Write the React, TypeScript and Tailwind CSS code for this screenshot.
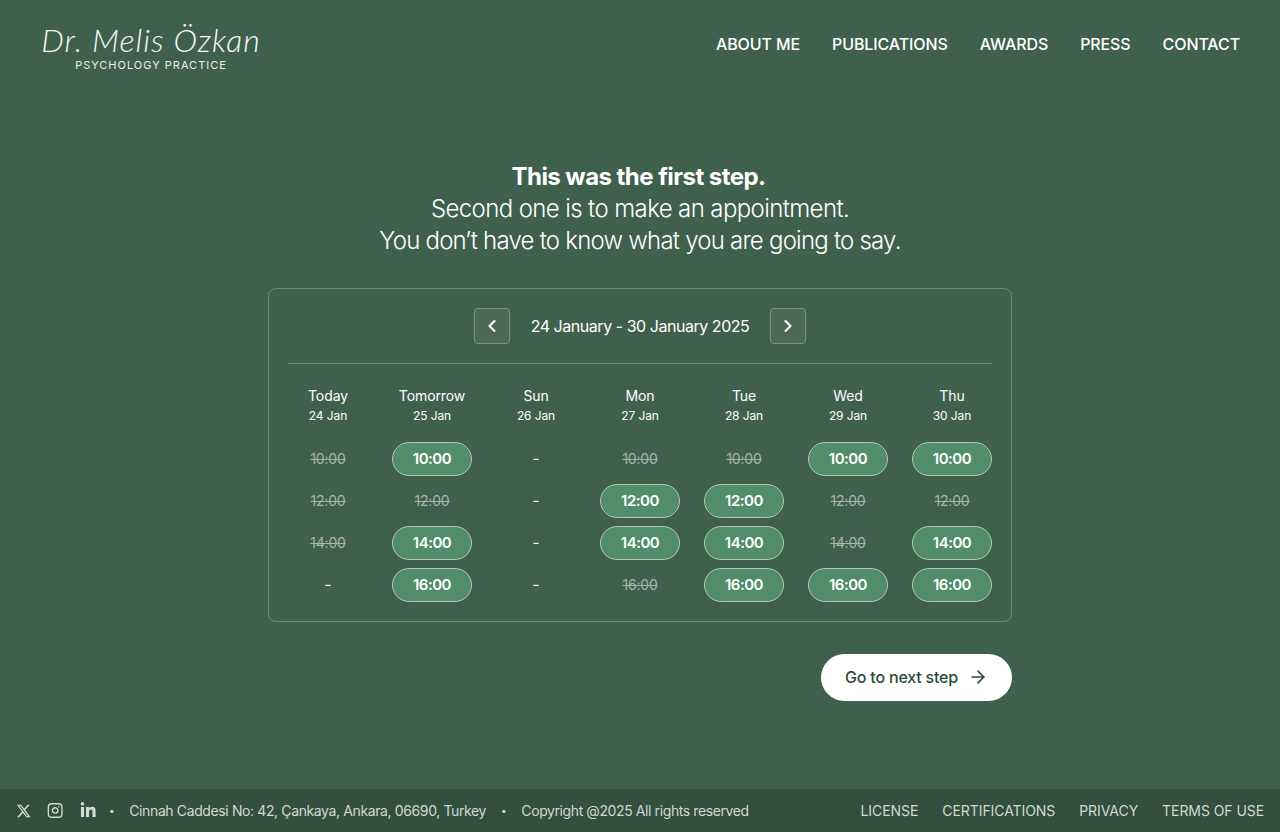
import React from "react";
import { ChevronLeft, ChevronRight, ArrowRight, Instagram } from "lucide-react";
import { FaXTwitter, FaLinkedinIn } from "react-icons/fa6";

const days = [
  { d: "Today", s: "24 Jan", t: ["x10:00", "x12:00", "x14:00", "-"] },
  { d: "Tomorrow", s: "25 Jan", t: ["10:00", "x12:00", "14:00", "16:00"] },
  { d: "Sun", s: "26 Jan", t: ["-", "-", "-", "-"] },
  { d: "Mon", s: "27 Jan", t: ["x10:00", "12:00", "14:00", "x16:00"] },
  { d: "Tue", s: "28 Jan", t: ["x10:00", "12:00", "14:00", "16:00"] },
  { d: "Wed", s: "29 Jan", t: ["10:00", "x12:00", "x14:00", "16:00"] },
  { d: "Thu", s: "30 Jan", t: ["10:00", "x12:00", "14:00", "16:00"] },
];

function Slot({ v }: { v: string }) {
  if (v === "-") return <div className="h-[34px] flex items-center justify-center text-[15px] text-white">-</div>;
  if (v[0] === "x")
    return <div className="h-[34px] pb-px flex items-center justify-center text-[14px] tracking-[-0.2px] line-through text-[#a3b5a9]">{v.slice(1)}</div>;
  return (
    <button className="h-[34px] w-20 pt-px rounded-[17px] border border-[#b5c7ba] bg-[#528d6b] text-[15px] tracking-[-0.5px] font-semibold text-white">
      {v}
    </button>
  );
}

export default function App() {
  return (
    <div className="h-[832px] w-[1280px] overflow-hidden bg-[#40604e] text-white flex flex-col font-['Inter',sans-serif]">
      <header className="h-[88px] flex items-center justify-between pl-[41px] pr-10 shrink-0">
        <div className="flex flex-col items-center w-[220px] pt-[7px]">
          <div className="font-['Lato',sans-serif] italic text-[32px] leading-[32px] tracking-[1px] font-light text-[#f4f7f5] whitespace-nowrap">
            Dr. Melis Özkan
          </div>
          <div className="text-[11px] leading-[14px] tracking-[1px] text-[#e8eeea] mt-[2px] whitespace-nowrap">PSYCHOLOGY PRACTICE</div>
        </div>
        <nav className="flex gap-8 text-[16px] tracking-[-0.1px] font-medium text-white">
          <span>ABOUT ME</span>
          <span>PUBLICATIONS</span>
          <span>AWARDS</span>
          <span>PRESS</span>
          <span>CONTACT</span>
        </nav>
      </header>

      <main className="flex-1 flex flex-col items-center pt-[73px]">
        <h1 className="text-center text-[24px] leading-8 font-light">
          <div className="font-bold tracking-[-0.55px] pr-[3px]">This was the first step.</div>
          <div className="tracking-[-0.61px]">Second one is to make an appointment.</div>
          <div className="tracking-[-0.78px]">You don’t have to know what you are going to say.</div>
        </h1>

        <section className="mt-[31px] w-[744px] h-[334px] rounded-lg border border-[#6d8a78] px-[19px] pt-[19px]">
          <div className="flex items-center justify-center gap-5 pb-[19px] border-b border-[#6d8a78]">
            <button className="size-9 flex items-center justify-center rounded border border-[#7c9686] bg-[#4a6957]">
              <ChevronLeft size={20} strokeWidth={2.5} />
            </button>
            <div className="text-[16px] w-[220px] text-center tracking-[-0.46px] whitespace-nowrap">24 January - 30 January 2025</div>
            <button className="size-9 flex items-center justify-center rounded border border-[#7c9686] bg-[#4a6957]">
              <ChevronRight size={20} strokeWidth={2.5} />
            </button>
          </div>
          <div className="grid grid-cols-[repeat(7,80px)] gap-x-6 pt-[21px]">
            {days.map((c) => (
              <div key={c.d} className="flex flex-col items-center">
                <div className="text-[14px] leading-5 pt-px tracking-[-0.1px] whitespace-nowrap">{c.d}</div>
                <div className="text-[12px] leading-5 tracking-[-0.1px] whitespace-nowrap">{c.s}</div>
                <div className="mt-[16px] flex flex-col gap-2 items-center w-full">
                  {c.t.map((v, i) => (
                    <Slot key={i} v={v} />
                  ))}
                </div>
              </div>
            ))}
          </div>
        </section>

        <div className="w-[744px] flex justify-end mt-8">
          <button className="h-[47px] w-[191px] pb-px rounded-full bg-white text-[#2f4a39] text-[16px] font-medium tracking-[-0.2px] flex items-center justify-center gap-[10px]">
            Go to next step
            <ArrowRight size={20} />
          </button>
        </div>
      </main>

      <footer className="h-[43px] shrink-0 bg-[#334f3d] flex items-center justify-between px-4 text-[14px] text-[#cfdad2]">
        <div className="flex items-center tracking-[-0.38px]">
          <div className="flex items-center gap-4 w-20">
            <FaXTwitter size={16} />
            <Instagram size={17} strokeWidth={2} />
            <FaLinkedinIn size={17} />
          </div>
          <span className="ml-[13px] mr-[15px] text-[10px]">•</span>
          <span>Cinnah Caddesi No: 42, Çankaya, Ankara, 06690, Turkey</span>
          <span className="mx-[15px] text-[10px]">•</span>
          <span className="tracking-[-0.4px]">Copyright @2025 All rights reserved</span>
        </div>
        <div className="flex items-center gap-6 tracking-[-0.07px]">
          <span>LICENSE</span>
          <span>CERTIFICATIONS</span>
          <span>PRIVACY</span>
          <span>TERMS OF USE</span>
        </div>
      </footer>
    </div>
  );
}
